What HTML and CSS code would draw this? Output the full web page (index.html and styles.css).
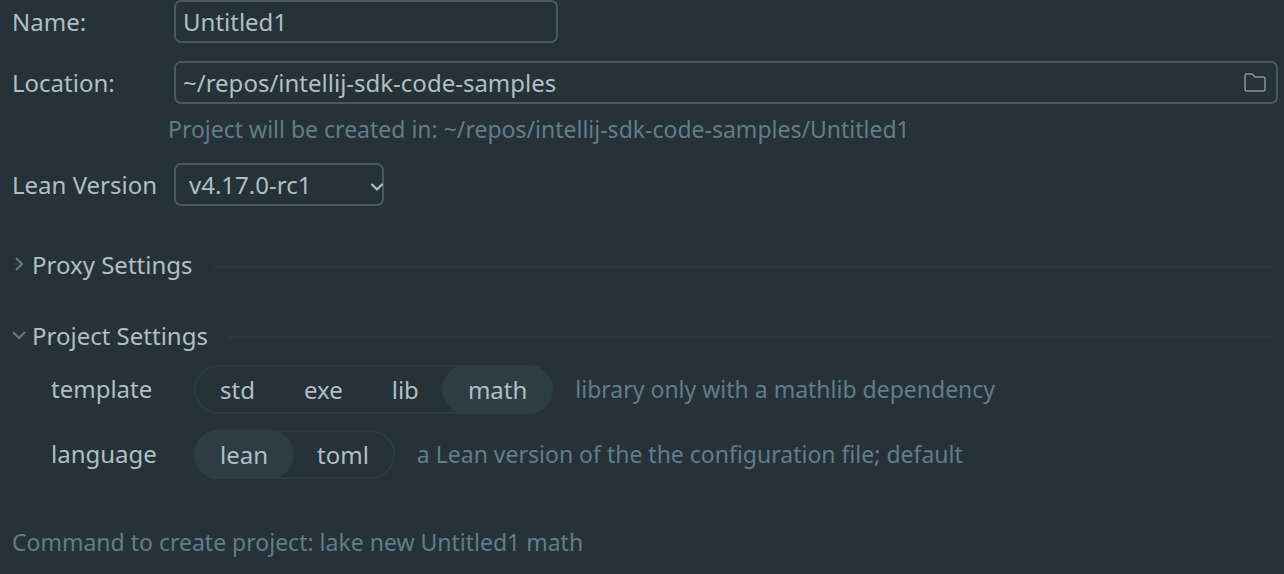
FILE: index.html
```html
<!DOCTYPE html>
<html lang="en">
<head>
<meta charset="utf-8">
<meta name="viewport" content="width=device-width, initial-scale=1">
<title>New Project</title>
<link rel="stylesheet" href="styles.css">
</head>
<body>
<form class="wizard">
  <div class="row">
    <label class="row-label" for="name">Name:</label>
    <input class="field field-name" id="name" type="text" value="Untitled1">
  </div>
  <div class="row">
    <label class="row-label" for="location">Location:</label>
    <div class="field path">
      <input class="path-input" id="location" type="text" value="~/repos/intellij-sdk-code-samples">
      <button class="browse" type="button" aria-label="Browse">
        <svg width="24" height="22" viewBox="0 0 24 22" fill="none" stroke="currentColor" stroke-width="1.5" stroke-linejoin="round"><path d="M2 4Q2 2 4 2H8.5Q9.500 2 10 2.700L12 5H20Q22 5 22 7V17Q22 19 20 19H4Q2 19 2 17Z"/></svg>
      </button>
    </div>
  </div>
  <p class="hint path-hint">Project will be created in: ~/repos/intellij-sdk-code-samples/Untitled1</p>
  <div class="row">
    <label class="row-label" for="version">Lean Version</label>
    <div class="field select-box">
      <select class="select" id="version"><option>v4.17.0-rc1</option></select>
      <svg class="select-arrow" width="14" height="10" viewBox="0 0 14 10" fill="none" stroke="currentColor" stroke-width="2.2"><path d="M1.500 2L7 7.500L12.500 2"/></svg>
    </div>
  </div>

  <details class="section">
    <summary class="section-title">
      <svg class="chevron" width="14" height="16" viewBox="0 0 14 16" fill="none" stroke="currentColor" stroke-width="2"><path d="M4 2L10 8L4 14"/></svg>
      <span class="section-name">Proxy Settings</span>
      <span class="rule"></span>
    </summary>
  </details>

  <details class="section" open>
    <summary class="section-title">
      <svg class="chevron" width="14" height="16" viewBox="0 0 14 16" fill="none" stroke="currentColor" stroke-width="2"><path d="M1 5L7 11L13 5"/></svg>
      <span class="section-name">Project Settings</span>
      <span class="rule"></span>
    </summary>
    <div class="options">
      <div class="option" role="radiogroup" aria-labelledby="template-label">
        <span class="option-label" id="template-label">template</span>
        <div class="segments">
          <label class="segment"><input class="segment-radio" type="radio" name="template">std</label>
          <label class="segment"><input class="segment-radio" type="radio" name="template">exe</label>
          <label class="segment"><input class="segment-radio" type="radio" name="template">lib</label>
          <label class="segment"><input class="segment-radio" type="radio" name="template" checked>math</label>
        </div>
        <span class="hint option-hint">library only with a mathlib dependency</span>
      </div>
      <div class="option" role="radiogroup" aria-labelledby="language-label">
        <span class="option-label" id="language-label">language</span>
        <div class="segments">
          <label class="segment"><input class="segment-radio" type="radio" name="language" checked>lean</label>
          <label class="segment"><input class="segment-radio" type="radio" name="language">toml</label>
        </div>
        <span class="hint option-hint">a Lean version of the the configuration file; default</span>
      </div>
    </div>
  </details>

  <p class="hint command">Command to create project: lake new Untitled1 math</p>
</form>
</body>
</html>
```
FILE: styles.css
```css
* {
  box-sizing: border-box;
}

body {
  margin: 0;
  background: #263238;
  color: #b0bec5;
  font: 24px/32px "Noto Sans", sans-serif;
}

input,
select,
button {
  font: inherit;
  color: inherit;
}

.wizard {
  padding: 0 6px 0 12px;
}

.row {
  display: flex;
  align-items: center;
  margin-bottom: 18px;
}

.row-label {
  flex: none;
  width: 162px;
}

.field {
  height: 43px;
  border: 2px solid #455a64;
  border-radius: 7px;
  background: transparent;
}

.field-name {
  width: 384px;
  padding: 0 7px;
}

.path {
  display: flex;
  flex: 1;
  align-items: center;
  padding: 0 9px 0 7px;
}

.path-input {
  flex: 1;
  min-width: 0;
  padding: 0;
  border: 0;
  background: none;
}

.browse {
  display: flex;
  padding: 0;
  border: 0;
  background: none;
  color: #87949a;
}

.hint {
  margin: 0;
  color: #607d8b;
  font-size: 23px;
}

.path-hint {
  margin: -9px 0 18px 156px;
}

.select-box {
  position: relative;
  width: 210px;
}

.select {
  width: 100%;
  height: 100%;
  padding: 0 13px;
  border: 0;
  background: none;
  appearance: none;
}

.select-arrow {
  position: absolute;
  top: 17px;
  right: -2px;
  pointer-events: none;
}

.section {
  margin-top: 34px;
}

.section-title {
  display: flex;
  align-items: center;
  padding: 5px 6px 0 0;
  list-style: none;
}

.row + .section {
  margin-top: 38px;
}

.chevron {
  flex: none;
  margin: 0 6px 2px 0;
  color: #607d8b;
}

.rule {
  flex: 1;
  height: 3px;
  margin: 2px 0 0 21px;
  background: #2a3740;
}

.options {
  display: grid;
  gap: 16px;
  padding: 13px 0 0 39px;
}

.option {
  display: flex;
  align-items: center;
}

.option-label {
  width: 143px;
  padding-bottom: 2px;
}

.option-hint {
  padding-bottom: 2px;
}

.segments {
  display: flex;
  gap: 1px;
  height: 49px;
  margin-right: 22px;
  border: 2px solid #2c3b41;
  border-radius: 25px;
}

.segment {
  display: flex;
  align-items: center;
  padding: 0 24px;
}

.segment:has(:checked) {
  margin: -2px;
  padding: 0 26px;
  border-radius: 25px;
  background: #2e3c43;
}

.segment-radio {
  position: absolute;
  margin: 0;
  opacity: 0;
  appearance: none;
}

.command {
  margin-top: 47px;
}
```
